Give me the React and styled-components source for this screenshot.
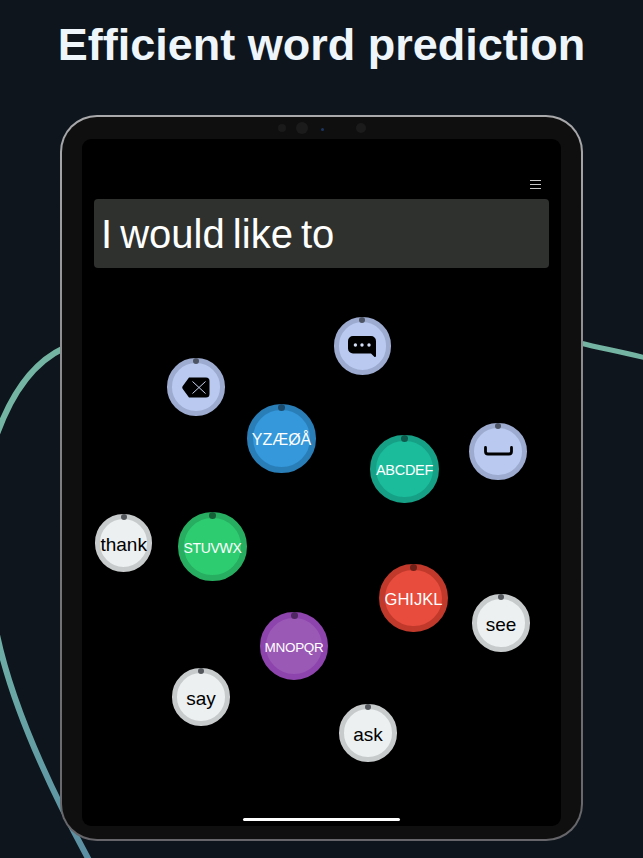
import React from 'react';
import styled, { createGlobalStyle } from 'styled-components';

const GlobalStyle = createGlobalStyle`
  html, body {
    margin: 0;
    padding: 0;
    background: #0e151d;
  }
  * {
    box-sizing: border-box;
  }
`;

const FONT = `'Liberation Sans', Arial, sans-serif`;

const PALETTES = {
  action: { ring: '#9dabd0', face: '#b9c9f0', knob: '#4d5564', text: '#000' },
  word: { ring: '#c8cbcc', face: '#ecf0f1', knob: '#54585c', text: '#000' },
  blue: { ring: '#2a7eb8', face: '#3498db', knob: '#1c4a6b', text: '#fff' },
  teal: { ring: '#16a085', face: '#1abc9c', knob: '#0f5c4e', text: '#fff' },
  green: { ring: '#27ae60', face: '#2ecc71', knob: '#166038', text: '#fff' },
  red: { ring: '#c0392b', face: '#e74c3c', knob: '#6e2118', text: '#fff' },
  purple: { ring: '#8e44ad', face: '#9b59b6', knob: '#4f2762', text: '#fff' },
};

// centre of each key, measured from the top left of the canvas
const KEYS = [
  { id: 'bksp', x: 114, y: 119, r: 28.75, tone: 'action', icon: 'backspace' },
  { id: 'chat', x: 280.25, y: 78.2, r: 28.75, tone: 'action', icon: 'chat' },
  { id: 'yz', x: 199.5, y: 170.3, r: 34.25, tone: 'blue', label: 'YZÆØÅ', size: 16 },
  { id: 'ab', x: 322.5, y: 200.8, r: 34.25, tone: 'teal', label: 'ABCDEF', size: 14.5, track: -0.3 },
  { id: 'space', x: 416, y: 183.3, r: 28.75, tone: 'action', icon: 'space' },
  { id: 'thank', x: 41.7, y: 274.8, r: 28.75, tone: 'word', label: 'thank', size: 19 },
  { id: 'st', x: 130.5, y: 278.5, r: 34.25, tone: 'green', label: 'STUVWX', size: 14, track: -0.3 },
  { id: 'gh', x: 331.5, y: 330, r: 34.25, tone: 'red', label: 'GHIJKL', size: 16.5 },
  { id: 'see', x: 419, y: 355, r: 28.75, tone: 'word', label: 'see', size: 19 },
  { id: 'mn', x: 212, y: 378, r: 34.25, tone: 'purple', label: 'MNOPQR', size: 13.5, track: -0.3 },
  { id: 'say', x: 119, y: 429, r: 28.75, tone: 'word', label: 'say', size: 19 },
  { id: 'ask', x: 286, y: 465, r: 28.75, tone: 'word', label: 'ask', size: 19 },
];

const Page = styled.div`
  position: relative;
  width: 643px;
  height: 858px;
  overflow: hidden;
  background: #0e151d;
  font-family: ${FONT};
`;

const Curves = styled.svg`
  position: absolute;
  inset: 0;
`;

const Title = styled.h1`
  position: relative;
  height: 115px;
  margin: 0;
  padding-bottom: 26px;
  display: flex;
  align-items: center;
  justify-content: center;
  font-size: 45px;
  font-weight: 700;
  color: #eef6fc;
`;

const Frame = styled.div`
  position: relative;
  width: 523px;
  height: 726px;
  margin-left: 60px;
  padding: 2px;
  border-radius: 37px;
  background: linear-gradient(#a9a9ac, #77777a 60%, #66666a);
`;

const Bezel = styled.div`
  height: 100%;
  padding: 22px 20px 13px;
  border-radius: 35px;
  background: #0f0f0f;
`;

const Lens = styled.span`
  position: absolute;
  top: ${(p) => p.$y - p.$r}px;
  left: ${(p) => p.$x - p.$r}px;
  width: ${(p) => p.$r * 2}px;
  height: ${(p) => p.$r * 2}px;
  border-radius: 50%;
  background: ${(p) => p.$color};
`;

const Screen = styled.div`
  position: relative;
  height: 100%;
  display: flex;
  flex-direction: column;
  border-radius: 9px;
  background: #000;
`;

const MenuRow = styled.div`
  height: 60px;
  padding: 41px 20px 0 0;
  display: flex;
  justify-content: flex-end;
`;

const MenuIcon = styled.div`
  width: 11px;
  height: 9px;
  display: flex;
  flex-direction: column;
  justify-content: space-between;

  span {
    height: 1px;
    background: #c9c9c9;
  }
`;

const Display = styled.div`
  height: 69px;
  margin: 0 12px;
  padding: 2px 0 0 7px;
  display: flex;
  align-items: center;
  border-radius: 4px;
  background: #2f312e;
  font-size: 40px;
  word-spacing: -3px;
  color: #fff;
`;

const Canvas = styled.div`
  position: relative;
  flex: 1;
`;

const Key = styled.div`
  position: absolute;
  top: ${(p) => p.$y - p.$r}px;
  left: ${(p) => p.$x - p.$r}px;
  width: ${(p) => p.$r * 2}px;
  height: ${(p) => p.$r * 2}px;
  display: flex;
  align-items: center;
  justify-content: center;
  border-radius: 50%;
  background: ${(p) => PALETTES[p.$tone].face};
  border: ${(p) => (p.$r > 30 ? 6 : 5)}px solid ${(p) => PALETTES[p.$tone].ring};
  color: ${(p) => PALETTES[p.$tone].text};
  font-size: ${(p) => p.$size}px;
  letter-spacing: ${(p) => p.$track || 0}px;
  white-space: nowrap;

  &::after {
    content: '';
    position: absolute;
    top: ${(p) => (p.$r > 30 ? -6 : -5)}px;
    left: 50%;
    width: ${(p) => (p.$r > 30 ? 7 : 6)}px;
    height: ${(p) => (p.$r > 30 ? 7 : 6)}px;
    margin-left: ${(p) => (p.$r > 30 ? -3.5 : -3)}px;
    border-radius: 50%;
    background: ${(p) => PALETTES[p.$tone].knob};
  }
`;

const KeyText = styled.span`
  position: relative;
  z-index: 1;
  padding-top: ${(p) => (p.$word ? 4 : 3)}px;
`;

const HomeBar = styled.div`
  position: absolute;
  bottom: 5px;
  left: 161px;
  width: 157px;
  height: 3px;
  border-radius: 2px;
  background: #fff;
`;

function BackspaceIcon() {
  return (
    <svg width="28" height="21" viewBox="0 0 28 21">
      <path d="M7 .5h17a3.500 3.500 0 0 1 3.500 3.500v13a3.500 3.500 0 0 1-3.500 3.500H7L.8 12a2.500 2.500 0 0 1 0-3z" fill="#000" />
      <path d="M10.500 4.500l13 12M23.500 4.500l-13 12" stroke="#c8d4f2" strokeWidth="1" fill="none" />
    </svg>
  );
}

function ChatIcon() {
  return (
    <svg width="28" height="21" viewBox="0 0 28 21">
      <path d="M5 0h18a5 5 0 0 1 5 5v15a1 1 0 0 1-1.700.7L23 17.500H5a5 5 0 0 1-5-5V5a5 5 0 0 1 5-5z" fill="#000" />
      <circle cx="7.400" cy="9" r="1.700" fill="#d5dff7" />
      <circle cx="14" cy="9" r="1.700" fill="#d5dff7" />
      <circle cx="21" cy="9" r="1.700" fill="#d5dff7" />
    </svg>
  );
}

function SpaceIcon() {
  return (
    <svg width="29" height="10" viewBox="0 0 29 10">
      <path d="M1.500 1.500v4a2.500 2.500 0 0 0 2.500 2.500h21a2.500 2.500 0 0 0 2.500-2.500v-4" fill="none" stroke="#000" strokeWidth="2.800" strokeLinecap="round" />
    </svg>
  );
}

const ICONS = { backspace: BackspaceIcon, chat: ChatIcon, space: SpaceIcon };

export default function App() {
  return (
    <Page>
      <GlobalStyle />
      <Curves width="643" height="858" viewBox="0 0 643 858">
        <defs>
          <linearGradient id="low" x1="0" y1="0" x2="0" y2="1">
            <stop offset="0" stopColor="#6fb0a6" />
            <stop offset="1" stopColor="#5a8ea3" />
          </linearGradient>
        </defs>
        <path d="M64 348C36 361 13 390 -3 434" fill="none" stroke="#74b4a2" strokeWidth="6" />
        <path d="M580 343C600 348 622 352 646 358" fill="none" stroke="#74b4a2" strokeWidth="5" />
        <path d="M-4 630C8 690 40 770 90 862" fill="none" stroke="url(#low)" strokeWidth="6" />
      </Curves>
      <Title>Efficient word prediction</Title>
      <Frame>
        <Bezel>
          <Screen>
            <MenuRow>
              <MenuIcon>
                <span />
                <span />
                <span />
              </MenuIcon>
            </MenuRow>
            <Display>I would like to</Display>
            <Canvas>
              {KEYS.map((k) => {
                const Icon = ICONS[k.icon];
                return (
                  <Key key={k.id} $x={k.x} $y={k.y} $r={k.r} $tone={k.tone} $size={k.size} $track={k.track}>
                    {Icon ? <Icon /> : <KeyText $word={k.tone === 'word'}>{k.label}</KeyText>}
                  </Key>
                );
              })}
            </Canvas>
            <HomeBar />
          </Screen>
        </Bezel>
        <Lens $x={222} $y={13} $r={4} $color="#1a1a1a" />
        <Lens $x={242} $y={13} $r={6} $color="#1b1b1b" />
        <Lens $x={262} $y={14} $r={1.5} $color="#1c3560" />
        <Lens $x={301} $y={13} $r={5} $color="#1b1b1b" />
      </Frame>
    </Page>
  );
}
